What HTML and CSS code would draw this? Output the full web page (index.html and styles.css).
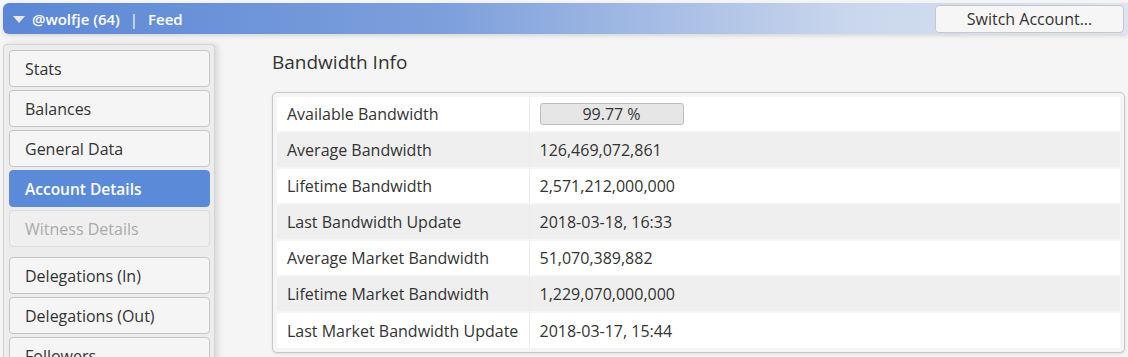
FILE: index.html
```html
<!DOCTYPE html>
<html lang="en">
<head>
    <meta charset="UTF-8">
    <title>Account Details</title>
    <link rel="stylesheet" href="styles.css">
</head>
<body>
<div class="topbar">
    <div class="account-title">
        <span class="caret"></span>
        <span>@wolfje (64)</span>
        <span class="sep">|</span>
        <span>Feed</span>
    </div>
    <button class="switch-btn">Switch Account...</button>
</div>

<div class="layout">
    <nav class="sidebar">
        <div class="nav-group">
            <a class="nav-item">Stats</a>
            <a class="nav-item">Balances</a>
            <a class="nav-item">General Data</a>
            <a class="nav-item active">Account Details</a>
            <a class="nav-item disabled">Witness Details</a>
        </div>
        <div class="nav-group">
            <a class="nav-item">Delegations (In)</a>
            <a class="nav-item">Delegations (Out)</a>
            <a class="nav-item">Followers</a>
        </div>
    </nav>

    <main class="content">
        <h2 class="section-title">Bandwidth Info</h2>
        <div class="info-card">
            <table class="info-table">
                <tr>
                    <td>Available Bandwidth</td>
                    <td><div class="meter">99.77 %</div></td>
                </tr>
                <tr>
                    <td>Average Bandwidth</td>
                    <td>126,469,072,861</td>
                </tr>
                <tr>
                    <td>Lifetime Bandwidth</td>
                    <td>2,571,212,000,000</td>
                </tr>
                <tr>
                    <td>Last Bandwidth Update</td>
                    <td>2018-03-18, 16:33</td>
                </tr>
                <tr>
                    <td>Average Market Bandwidth</td>
                    <td>51,070,389,882</td>
                </tr>
                <tr>
                    <td>Lifetime Market Bandwidth</td>
                    <td>1,229,070,000,000</td>
                </tr>
                <tr>
                    <td>Last Market Bandwidth Update</td>
                    <td>2018-03-17, 15:44</td>
                </tr>
            </table>
        </div>
    </main>
</div>
</body>
</html>
```

FILE: styles.css
```css
* {
    margin: 0;
    padding: 0;
    box-sizing: border-box;
}

body {
    font-family: 'Open Sans', 'Noto Sans', sans-serif;
    font-size: 16px;
    color: #333;
    background: #f5f5f5;
    padding: 3px 0 0 3px;
    height: 357px;
    overflow: hidden;
}

/* top bar */
.topbar {
    height: 31px;
    display: flex;
    align-items: center;
    justify-content: space-between;
    padding: 0 4px 0 10px;
    border-radius: 6px 0 0 6px;
    background: linear-gradient(90deg, #5b87d6 0%, #7ea0dc 40%, #c9d6ec 75%, #dde5f2 100%);
    box-shadow: 0 2px 4px rgba(0, 0, 0, 0.12);
}

.account-title {
    display: flex;
    align-items: center;
    color: #fff;
    font-size: 15px;
    font-weight: 600;
}

.caret {
    width: 0;
    height: 0;
    border-left: 6px solid transparent;
    border-right: 6px solid transparent;
    border-top: 7px solid #e8e8e8;
    margin-right: 7px;
    margin-top: 2px;
}

.sep {
    font-weight: 400;
    margin: 0 10px 0 10px;
}

.switch-btn {
    width: 189px;
    height: 28px;
    font-family: inherit;
    font-size: 16px;
    color: #333;
    background: #f6f6f6;
    border: 1px solid #c8c8c8;
    border-radius: 4px;
}

/* layout */
.layout {
    display: flex;
    margin-top: 10px;
}

.sidebar {
    width: 212px;
    flex-shrink: 0;
    height: 320px;
    background: #ececec;
    border: 1px solid #d4d4d4;
    border-bottom: none;
    border-radius: 4px 4px 0 0;
    box-shadow: 3px 0 6px rgba(0, 0, 0, 0.12);
    padding: 5px 4px 0 5px;
}

.nav-group {
    display: flex;
    flex-direction: column;
    gap: 3px;
    margin-bottom: 10px;
}

.nav-item {
    height: 37px;
    display: flex;
    align-items: center;
    padding-left: 15px;
    background: #f5f5f5;
    border: 1px solid #c6c6c6;
    border-radius: 4px;
    font-size: 16px;
    color: #333;
}

.nav-item.active {
    background: #5b8bd8;
    border-color: #5b8bd8;
    color: #fff;
    font-weight: 600;
    font-size: 15.5px;
}

.nav-item.disabled {
    background: #efefef;
    border-color: #dcdcdc;
    color: #aaa;
}

/* content */
.content {
    flex: 1;
    padding: 4px 3px 0 57px;
}

.section-title {
    font-size: 19px;
    font-weight: 400;
    color: #333;
    height: 30px;
    line-height: 28px;
    margin-bottom: 14px;
}

.info-card {
    border: 1px solid #c8c8c8;
    border-radius: 5px;
    padding: 4px;
    background: #f5f5f5;
    box-shadow: 0 1px 3px rgba(0, 0, 0, 0.1);
}

.info-table {
    width: 100%;
    border-collapse: collapse;
}

.info-table td {
    height: 36px;
    padding: 0 10px;
    background: #fff;
    border-top: 2px solid #f5f5f5;
    white-space: nowrap;
}

.info-table tr:first-child td {
    border-top: none;
    height: 35px;
}

.info-table tr:nth-child(even) td {
    background: #efefef;
}

.info-table td:first-child {
    width: 252px;
    border-right: 1px solid #ececec;
}

.meter {
    width: 144px;
    height: 22px;
    line-height: 20px;
    text-align: center;
    background: #e6e6e6;
    border: 1px solid #bdbdbd;
    border-radius: 3px;
}
```
